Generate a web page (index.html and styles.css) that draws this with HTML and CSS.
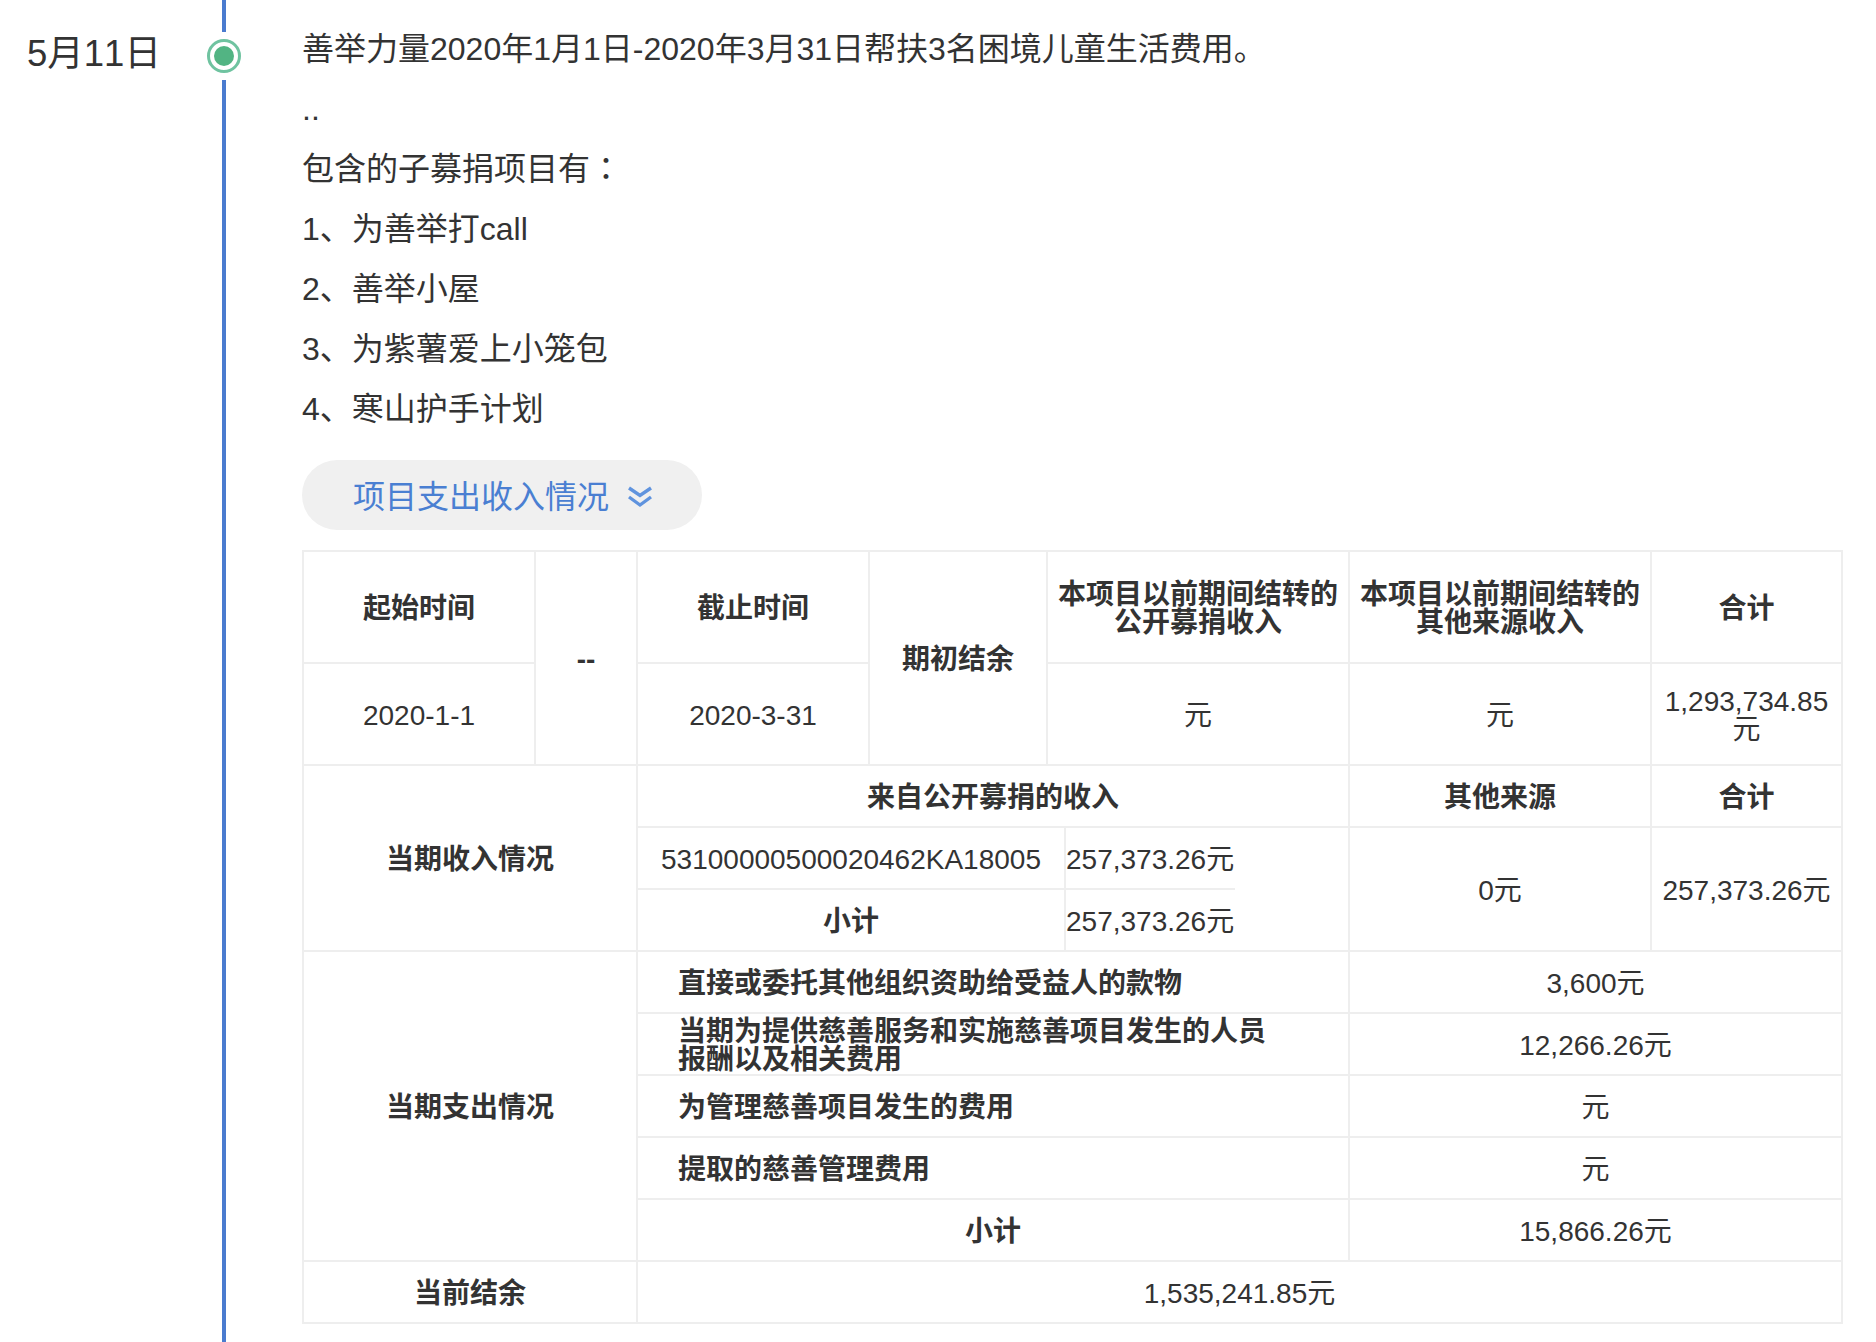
FILE: index.html
```html
<!DOCTYPE html>
<html lang="zh-CN">
<head>
<meta charset="utf-8">
<title>项目进展</title>
<link rel="stylesheet" href="styles.css">
</head>
<body>
<div class="page">
  <div class="date">5月11日</div>
  <div class="rail">
    <div class="rail-top"></div>
    <div class="dot"></div>
    <div class="rail-rest"></div>
  </div>
  <div class="content">
    <p class="line">善举力量2020年1月1日-2020年3月31日帮扶3名困境儿童生活费用。</p>
    <p class="line">..</p>
    <p class="line">包含的子募捐项目有<span class="colon" lang="zh-Hant">：</span></p>
    <p class="line">1、为善举打call</p>
    <p class="line">2、善举小屋</p>
    <p class="line">3、为紫薯爱上小笼包</p>
    <p class="line">4、寒山护手计划</p>
    <div class="toggle">
      <span class="toggle-label">项目支出收入情况</span>
      <svg class="chev" width="24" height="22" viewBox="0 0 24 22" fill="none" stroke="#5f93de" stroke-width="3.4">
        <path d="M1 2 L12 9.5 L23 2"/>
        <path d="M1 11 L12 19 L23 11"/>
      </svg>
    </div>
    <table class="report">
      <colgroup>
        <col class="c1"><col class="c2"><col class="c3"><col class="c4"><col class="c5"><col class="c6"><col class="c7"><col class="c8"><col class="c9">
      </colgroup>
      <tr class="r-head">
        <th>起始时间</th>
        <th rowspan="2">--</th>
        <th>截止时间</th>
        <th rowspan="2">期初结余</th>
        <th class="wide" colspan="3">本项目以前期间结转的<br>公开募捐收入</th>
        <th class="wide">本项目以前期间结转的<br>其他来源收入</th>
        <th>合计</th>
      </tr>
      <tr class="r-sub">
        <td>2020-1-1</td>
        <td>2020-3-31</td>
        <td colspan="3">元</td>
        <td>元</td>
        <td>1,293,734.85元</td>
      </tr>
      <tr class="r">
        <th colspan="2" rowspan="3">当期收入情况</th>
        <th colspan="5">来自公开募捐的收入</th>
        <th>其他来源</th>
        <th>合计</th>
      </tr>
      <tr class="r">
        <td colspan="3">53100000500020462KA18005</td>
        <td class="tight">257,373.26元</td>
        <td class="blank" rowspan="2"></td>
        <td rowspan="2">0元</td>
        <td rowspan="2">257,373.26元</td>
      </tr>
      <tr class="r">
        <th colspan="3">小计</th>
        <td class="tight">257,373.26元</td>
      </tr>
      <tr class="r">
        <th colspan="2" rowspan="5">当期支出情况</th>
        <th class="left" colspan="5">直接或委托其他组织资助给受益人的款物</th>
        <td colspan="2">3,600元</td>
      </tr>
      <tr class="r">
        <th class="left" colspan="5">当期为提供慈善服务和实施慈善项目发生的人员报酬以及相关费用</th>
        <td colspan="2">12,266.26元</td>
      </tr>
      <tr class="r">
        <th class="left" colspan="5">为管理慈善项目发生的费用</th>
        <td colspan="2">元</td>
      </tr>
      <tr class="r">
        <th class="left" colspan="5">提取的慈善管理费用</th>
        <td colspan="2">元</td>
      </tr>
      <tr class="r">
        <th colspan="5">小计</th>
        <td colspan="2">15,866.26元</td>
      </tr>
      <tr class="r">
        <th colspan="2">当前结余</th>
        <td colspan="7">1,535,241.85元</td>
      </tr>
    </table>
  </div>
</div>
</body>
</html>
```
FILE: styles.css
```css
* { box-sizing: border-box; }
html, body { margin: 0; padding: 0; background: #fff; }
body {
  font-family: "Liberation Sans", "Noto Sans CJK SC", sans-serif;
  font-kerning: none;
  color: #333;
  overflow: hidden;
}
.page {
  display: flex;
  height: 1342px;
  width: 1876px;
}
.date {
  width: 207px;
  padding: 29px 0 0 27px;
  font-size: 36.5px;
  line-height: 50px;
  white-space: nowrap;
}
.rail {
  width: 34px;
  display: flex;
  flex-direction: column;
  align-items: center;
}
.rail-top { width: 4px; height: 32px; background: #4a7bcf; }
.rail-rest { width: 4px; flex: 1; background: #4a7bcf; }
.dot {
  width: 34px;
  height: 34px;
  margin: 7px 0;
  border: 3px solid #6fc3a0;
  border-radius: 50%;
  padding: 4px;
  background: #52b483;
  background-clip: content-box;
}
.content {
  margin-left: 61px;
  padding-top: 19px;
  width: 1540px;
}
.line {
  margin: 0;
  font-size: 32px;
  line-height: 60px;
  white-space: nowrap;
}
.colon { font-family: "Liberation Sans", "Noto Sans CJK TC", sans-serif; }
.toggle {
  display: inline-flex;
  align-items: center;
  height: 70px;
  width: 400px;
  margin-top: 21px;
  padding-left: 51px;
  border-radius: 35px;
  background: #f0f0f0;
  color: #4a7fd2;
  font-size: 32px;
  vertical-align: top;
}
.toggle-label { padding-bottom: 3px; }
.chev { margin-left: 19px; margin-top: 4px; }
.report {
  display: table;
  width: 1539px;
  margin-top: 20px;
  table-layout: fixed;
  border-collapse: collapse;
  font-size: 28px;
  line-height: 28px;
}
.c1, .c3 { width: 232px; }
.c2 { width: 102px; }
.c4 { width: 178px; }
.c5 { width: 18px; }
.c6 { width: 170px; }
.c7 { width: 114px; }
.c8 { width: 302px; }
.c9 { width: 191px; }
.report th, .report td {
  border: 2px solid #eee;
  padding: 4px 10px 0;
  text-align: center;
  vertical-align: middle;
  color: #333;
}
.report th { font-weight: 700; }
.report .wide { padding-left: 0; padding-right: 0; white-space: nowrap; }
.r-head { height: 112px; }
.r-sub { height: 102px; }
.r { height: 62px; }
.report .left { text-align: left; padding: 4px 60px 0 40px; }
.report .tight { padding: 4px 0 0; text-align: left; border-right: none; white-space: nowrap; }
.report .blank { border-left: none; padding: 0; }
```
